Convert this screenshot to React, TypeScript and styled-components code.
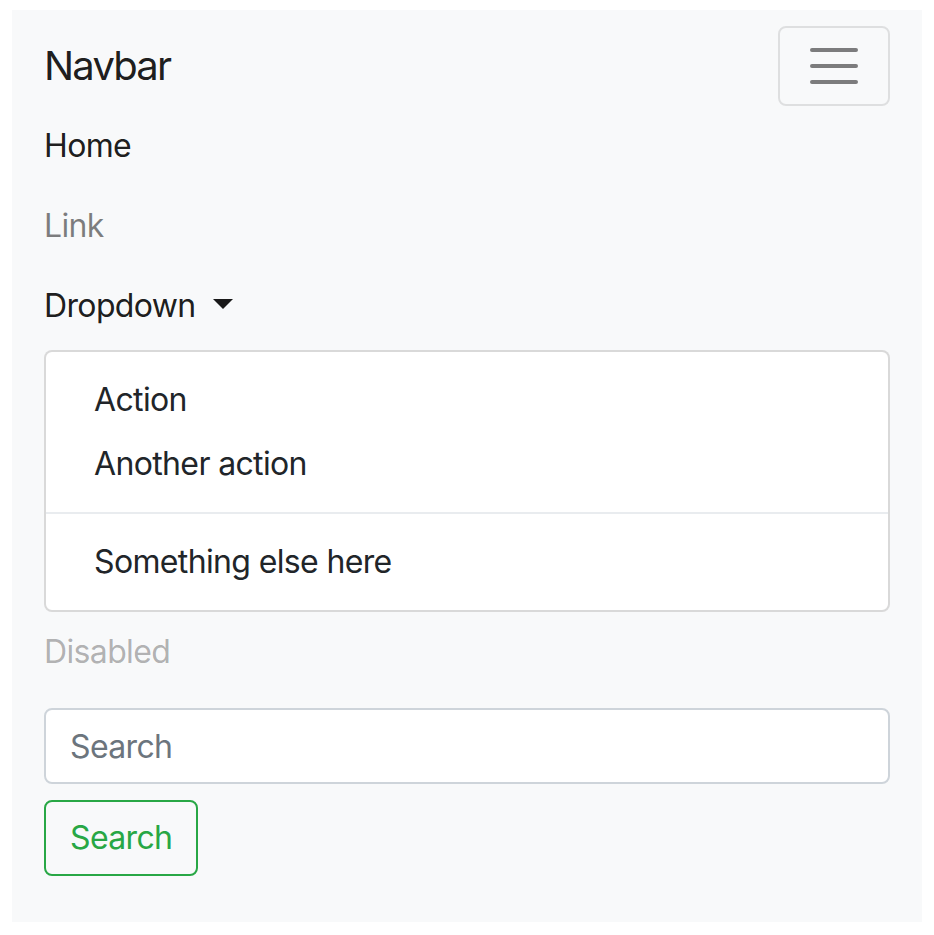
import styled, { createGlobalStyle } from 'styled-components';

const GlobalStyle = createGlobalStyle`
  html, body {
    margin: 0;
    padding: 0;
    background: #fff;
  }
  body {
    font-family: Inter, "Liberation Sans", Arial, sans-serif;
    font-size: 32px;
    line-height: 1.5;
    letter-spacing: -0.02em;
    color: #212529;
  }
`;

const Page = styled.div`
  padding: 10px 12px;
`;

const Navbar = styled.nav`
  width: 910px;
  box-sizing: border-box;
  background: #f8f9fa;
  padding: 16px 32px 46px;
  display: flex;
  flex-direction: column;
`;

const HeaderRow = styled.div`
  display: flex;
  align-items: center;
  justify-content: space-between;
`;

const Brand = styled.a`
  font-size: 40px;
  line-height: 60px;
  letter-spacing: -0.045em;
  padding: 10px 0;
  color: rgba(0, 0, 0, 0.9);
  text-decoration: none;
`;

const Toggler = styled.button`
  width: 112px;
  height: 80px;
  padding: 0;
  display: flex;
  align-items: center;
  justify-content: center;
  background: transparent;
  border: 2px solid rgba(0, 0, 0, 0.1);
  border-radius: 8px;
`;

const NavList = styled.ul`
  list-style: none;
  margin: 0;
  padding: 0;
  display: flex;
  flex-direction: column;
`;

const NavLink = styled.a<{ $state?: 'active' | 'disabled' }>`
  display: block;
  padding: 16px 0;
  line-height: 48px;
  text-decoration: none;
  color: ${({ $state }) =>
    $state === 'active'
      ? 'rgba(0, 0, 0, 0.9)'
      : $state === 'disabled'
      ? 'rgba(0, 0, 0, 0.3)'
      : 'rgba(0, 0, 0, 0.5)'};
`;

const Caret = styled.span`
  display: inline-block;
  margin-left: 17px;
  vertical-align: 8px;
  border-top: 10px solid currentColor;
  border-left: 10px solid transparent;
  border-right: 10px solid transparent;
`;

const Menu = styled.div`
  margin-top: 4px;
  padding: 16px 0;
  background: #fff;
  border: 2px solid rgba(0, 0, 0, 0.15);
  border-radius: 8px;
`;

const MenuItem = styled.a`
  display: block;
  padding: 8px 48px;
  line-height: 48px;
  color: #212529;
  text-decoration: none;
`;

const Divider = styled.div`
  height: 0;
  margin: 16px 0;
  border-top: 2px solid #e9ecef;
`;

const Form = styled.form`
  display: flex;
  flex-direction: column;
  align-items: flex-start;
  gap: 16px;
  margin-top: 16px;
`;

const SearchInput = styled.input`
  width: 100%;
  height: 76px;
  box-sizing: border-box;
  padding: 12px 24px;
  font: inherit;
  letter-spacing: inherit;
  line-height: 48px;
  color: #495057;
  background: #fff;
  border: 2px solid #ced4da;
  border-radius: 8px;
  outline: none;
  &::placeholder {
    color: #6c757d;
  }
`;

const OutlineButton = styled.button`
  height: 76px;
  box-sizing: border-box;
  padding: 12px 24px;
  font: inherit;
  letter-spacing: inherit;
  line-height: 48px;
  color: #28a745;
  background: transparent;
  border: 2px solid #28a745;
  border-radius: 8px;
`;

const TogglerIcon = () => (
  <svg width="60" height="60" viewBox="0 0 30 30">
    <path
      d="M4 7h22M4 15h22M4 23h22"
      stroke="rgba(0,0,0,0.5)"
      strokeWidth="2"
      strokeLinecap="round"
      strokeMiterlimit="10"
    />
  </svg>
);

const App = () => (
  <Page>
    <GlobalStyle />
    <Navbar>
      <HeaderRow>
        <Brand href="#">Navbar</Brand>
        <Toggler type="button" aria-label="Toggle navigation">
          <TogglerIcon />
        </Toggler>
      </HeaderRow>
      <NavList>
        <li>
          <NavLink href="#" $state="active">Home</NavLink>
        </li>
        <li>
          <NavLink href="#">Link</NavLink>
        </li>
        <li>
          <NavLink href="#" $state="active">
            Dropdown
            <Caret />
          </NavLink>
          <Menu>
            <MenuItem href="#">Action</MenuItem>
            <MenuItem href="#">Another action</MenuItem>
            <Divider />
            <MenuItem href="#">Something else here</MenuItem>
          </Menu>
        </li>
        <li>
          <NavLink $state="disabled">Disabled</NavLink>
        </li>
      </NavList>
      <Form onSubmit={(e) => e.preventDefault()}>
        <SearchInput type="search" placeholder="Search" aria-label="Search" />
        <OutlineButton type="submit">Search</OutlineButton>
      </Form>
    </Navbar>
  </Page>
);

export default App;
